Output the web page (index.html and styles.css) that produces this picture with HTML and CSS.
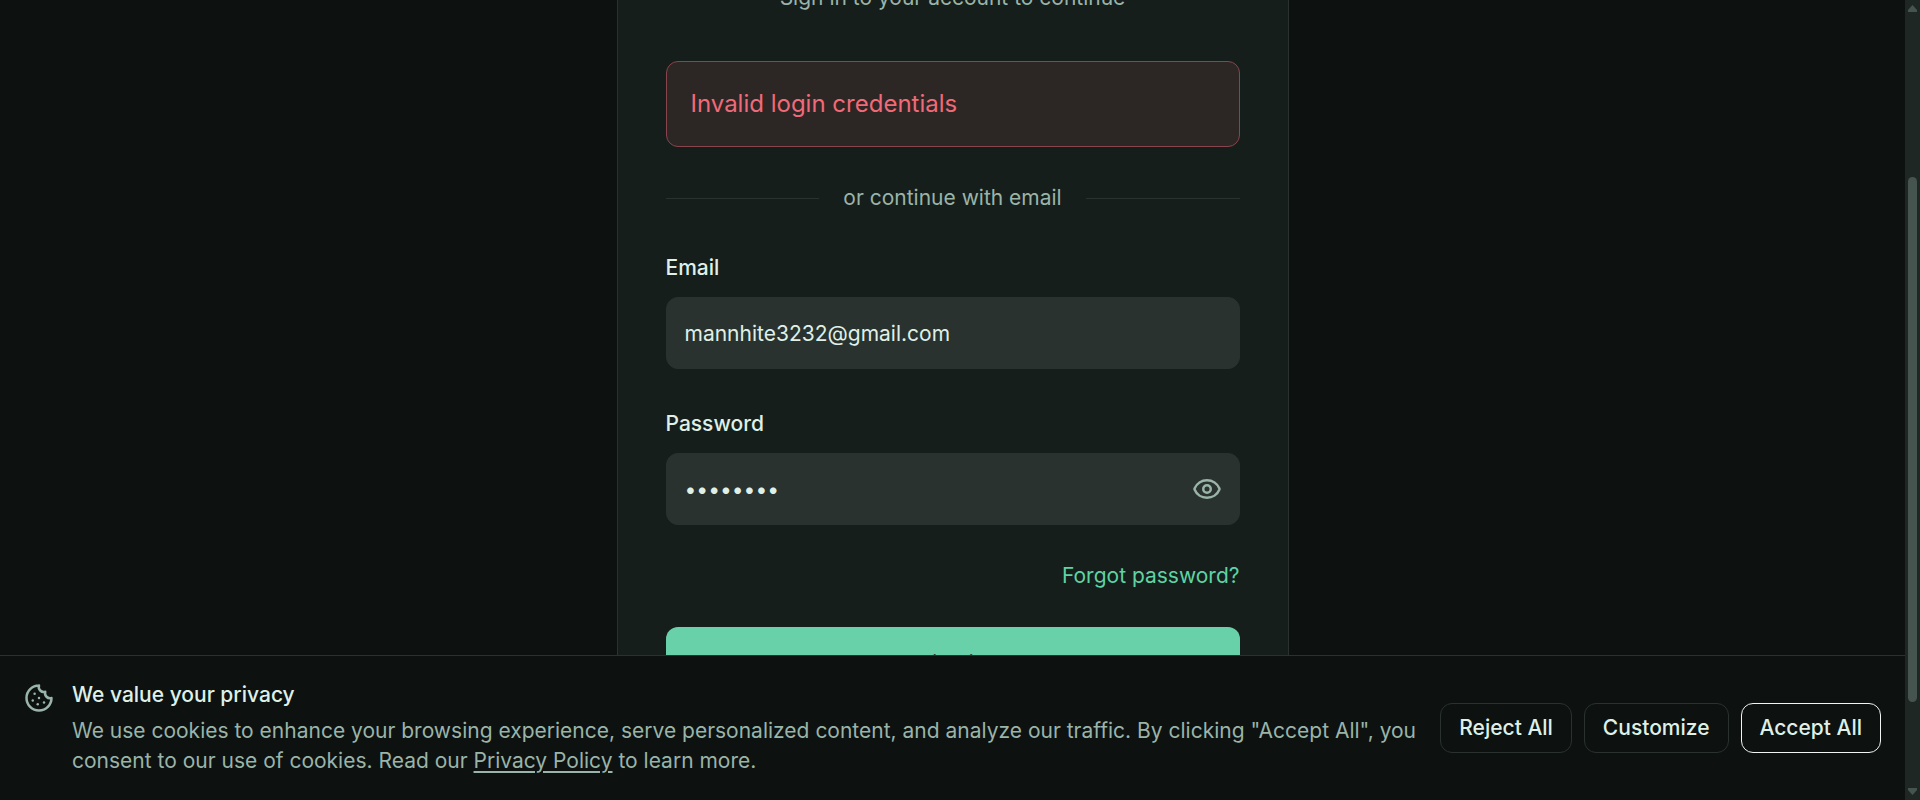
FILE: index.html
```html
<!DOCTYPE html>
<html lang="en">
<head>
<meta charset="utf-8">
<title>Sign in</title>
<link rel="stylesheet" href="styles.css">
</head>
<body class="shell">
<div class="page">
  <main class="content">
    <section class="card">
      <p class="subtitle">Sign in to your account to continue</p>
      <div class="alert" role="alert">Invalid login credentials</div>
      <div class="divider"><span>or continue with email</span></div>
      <form class="form">
        <div class="field">
          <label class="label" for="email">Email</label>
          <input class="input" id="email" type="email" value="mannhite3232@gmail.com">
        </div>
        <div class="field">
          <label class="label" for="password">Password</label>
          <div class="input-group">
            <input class="input input-password" id="password" type="password" value="password">
            <button class="reveal" type="button" aria-label="Show password">
              <svg class="icon" viewBox="0 0 24 24"><path d="M2.062 12.348a1 1 0 0 1 0-.696 10.75 10.75 0 0 1 19.876 0 1 1 0 0 1 0 .696 10.75 10.75 0 0 1-19.876 0"/><circle cx="12" cy="12" r="3"/></svg>
            </button>
          </div>
        </div>
        <a class="forgot" href="#">Forgot password?</a>
        <button class="submit" type="submit">Sign in</button>
      </form>
    </section>
  </main>
  <footer class="consent">
    <svg class="icon consent-icon" viewBox="0 0 24 24" aria-hidden="true"><path d="M12 2a10 10 0 1 0 10 10 4 4 0 0 1-5-5 4 4 0 0 1-5-5"/><path d="M8.5 8.5v.01"/><path d="M16 15.500v.01"/><path d="M12 12v.01"/><path d="M11 17v.01"/><path d="M7 14v.01"/></svg>
    <div class="consent-text">
      <h2 class="consent-title">We value your privacy</h2>
      <p class="consent-body">We use cookies to enhance your browsing experience, serve personalized content, and analyze our traffic. By clicking "Accept All", you consent to our use of cookies. Read our <a class="policy" href="#">Privacy Policy</a> to learn more.</p>
    </div>
    <div class="actions">
      <button class="action" type="button">Reject All</button>
      <button class="action" type="button">Customize</button>
      <button class="action action-primary" type="button">Accept All</button>
    </div>
  </footer>
</div>
<div class="scrollbar" aria-hidden="true">
  <svg class="arrow" viewBox="0 0 9 7"><path d="M4.500 0 9 5v2H0V5z"/></svg>
  <div class="track"><div class="thumb"></div></div>
  <svg class="arrow" viewBox="0 0 9 7"><path d="M4.500 7 9 2V0H0v2z"/></svg>
</div>
</body>
</html>
```
FILE: styles.css
```css
:root {
  --bg: #0d1110;
  --card: #161e1b;
  --line: #2a322f;
  --fg: #def0e7;
  --muted: #9ab4a9;
  --accent: #69d1a9;
}

* { box-sizing: border-box; }

.shell {
  display: flex;
  height: 100vh;
  margin: 0;
  overflow: hidden;
  background: var(--bg);
  color: var(--fg);
  font: 400 21px/30px Inter, "Liberation Sans", sans-serif;
}

.page {
  display: flex;
  flex: 1;
  flex-direction: column;
  min-width: 0;
}

.content {
  flex: 1;
  min-height: 0;
  overflow: hidden;
}

/* Card is scrolled so that its heading sits above the visible area. */
.card {
  max-width: 672px;
  margin: -66px auto 0;
  padding: 48px;
  border: 1px solid var(--line);
  background: var(--card);
}

.subtitle {
  margin: 0 0 48px;
  color: var(--muted);
  text-align: center;
}

.alert {
  padding: 24px;
  border: 1px solid #8a444d;
  border-radius: 12px;
  background: #2c2625;
  color: #f16a77;
  font-size: 24px;
  line-height: 36px;
}

.divider {
  display: flex;
  align-items: center;
  gap: 24px;
  margin: 36px 0;
  color: var(--muted);
}

.divider::before,
.divider::after {
  flex: 1;
  height: 1px;
  background: var(--line);
  content: "";
}

.form {
  display: flex;
  flex-direction: column;
  gap: 36px;
}

.field {
  display: flex;
  flex-direction: column;
  gap: 10px;
}

.label {
  font-weight: 500;
  line-height: 38px;
}

.input {
  width: 100%;
  height: 72px;
  padding: 0 18px;
  border: 1px solid var(--line);
  border-radius: 12px;
  outline: none;
  background: var(--line);
  color: inherit;
  font: inherit;
}

.input-group { position: relative; }

.input-password { padding-right: 66px; }

.reveal {
  display: flex;
  align-items: center;
  position: absolute;
  inset: 0 0 0 auto;
  padding: 0 18px;
  border: 0;
  background: none;
  color: var(--muted);
}

.icon {
  width: 30px;
  height: 30px;
  fill: none;
  stroke: currentColor;
  stroke-width: 2;
  stroke-linecap: round;
  stroke-linejoin: round;
}

.forgot {
  align-self: flex-end;
  color: #5ed3a3;
  text-decoration: none;
}

.submit {
  height: 74px;
  border: 0;
  border-radius: 12px;
  background: var(--accent);
  color: var(--bg);
  font: inherit;
  font-weight: 500;
}

.consent {
  display: flex;
  align-items: flex-start;
  padding: 24px;
  border-top: 1px solid var(--line);
  background: var(--bg);
}

.consent-icon {
  flex: none;
  margin: 3px 18px 0 0;
  color: var(--muted);
}

.consent-text { flex: 1; }

.consent-title {
  margin: 0 0 6px;
  font-size: 21px;
  font-weight: 500;
  line-height: 30px;
}

.consent-body {
  margin: 0;
  color: var(--muted);
}

.policy {
  color: inherit;
  text-underline-offset: 3px;
}

.actions {
  display: flex;
  align-self: center;
  gap: 12px;
  margin-left: 24px;
}

.action {
  height: 50px;
  padding: 0 18px;
  border: 1px solid var(--line);
  border-radius: 12px;
  background: none;
  color: inherit;
  font: inherit;
  font-weight: 500;
}

.action-primary { border-color: #f0f5f3; }

.scrollbar {
  display: flex;
  flex-direction: column;
  align-items: center;
  gap: 4px;
  width: 15px;
  padding: 5px 0;
  background: #1f2724;
}

.arrow {
  flex: none;
  width: 9px;
  height: 7px;
  fill: #46544f;
}

.track {
  flex: 1;
  width: 9px;
}

.thumb {
  height: 525px;
  margin-top: 161px;
  border-radius: 5px;
  background: #46544f;
}
```
